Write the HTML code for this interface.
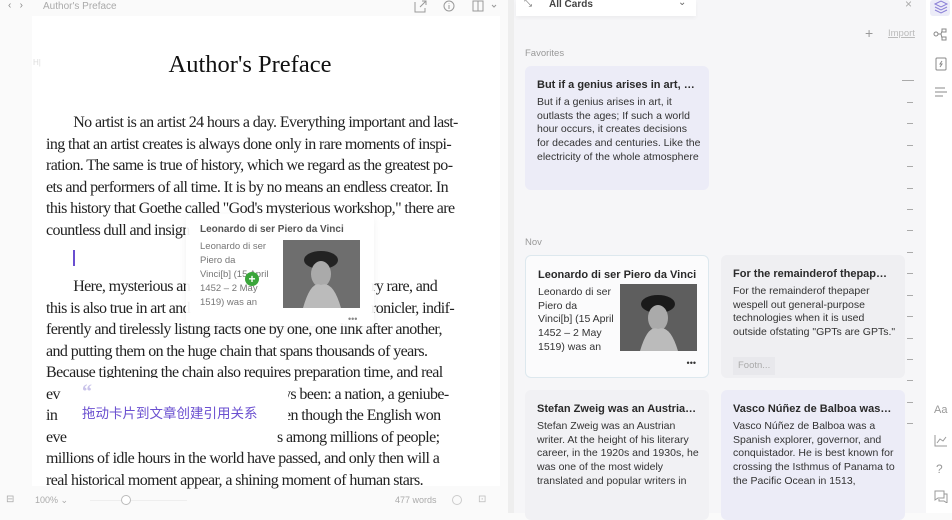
<!DOCTYPE html>
<html><head><meta charset="utf-8"><style>
*{margin:0;padding:0;box-sizing:border-box}
body{width:952px;height:513px;overflow:hidden;background:#fafafa;font-family:"Liberation Sans",sans-serif;position:relative}
.abs{position:absolute}
.doc{left:32px;top:16px;width:468px;height:470px;background:#fff}
.serif{font-family:"Liberation Serif",serif;font-size:16px;letter-spacing:-0.6px;color:#222;white-space:nowrap;line-height:21.5px}
.serif div{position:relative;height:21.5px}
.serif span{position:absolute;top:0}
.card{position:absolute;border-radius:6px;padding:13px 12px;font-size:10.5px;color:#333;line-height:13.8px;white-space:nowrap}
.card h4{font-size:11px;font-weight:600;color:#2a2a2a;margin:0 0 3px;white-space:nowrap;overflow:hidden;text-overflow:ellipsis}
.ico{position:absolute;color:#999;font-size:11px}
.tick{position:absolute;left:907px;width:6px;height:1px;background:#aaa}
</style></head><body>
<div class="abs" style="left:8px;top:0;font-size:10px;color:#888">‹&nbsp;&nbsp;&nbsp;›</div>
<div class="abs" style="left:43px;top:1px;font-size:10px;color:#aaa">Author's Preface</div>
<svg class="abs" style="left:414px;top:0" width="90" height="13" fill="none" stroke="#999" stroke-width="1"><path d="M1 2v10h10V8M6 7l6-6M8 1h4v4"/><circle cx="35" cy="6" r="5"/><path d="M35 5v4M35 3v0.5"/><rect x="59" y="1" width="10" height="10"/><path d="M64 1v10M78 5l2 2 2-2"/></svg>
<div class="abs" style="left:508px;top:0;width:6px;height:513px;background:#eee"></div>
<div class="abs doc"></div>
<div class="abs" style="left:33px;top:58px;font-size:8px;color:#ddd">H|</div>
<div class="abs" style="left:0;top:51px;width:500px;text-align:center;font-family:'Liberation Serif',serif;font-size:24.5px;color:#111">Author's Preface</div>
<div class="abs serif" style="left:46px;top:112px">
<div>&nbsp;&nbsp;&nbsp;&nbsp;&nbsp;&nbsp;&nbsp;&nbsp;No artist is an artist 24 hours a day. Everything important and last-</div>
<div>ing that an artist creates is always done only in rare moments of inspi-</div>
<div>ration. The same is true of history, which we regard as the greatest po-</div>
<div>ets and performers of all time. It is by no means an endless creator. In</div>
<div>this history that Goethe called "God's mysterious workshop," there are</div>
<div>countless dull and insign</div>
<div style="height:35px"></div>
<div>&nbsp;&nbsp;&nbsp;&nbsp;&nbsp;&nbsp;&nbsp;&nbsp;Here, mysterious an<span style="left:325px">ry rare, and</span></div>
<div>this is also true in art and<span style="left:325px">ronicler, indif-</span></div>
<div>ferently and tirelessly listing facts one by one, one link after another,</div>
<div>and putting them on the huge chain that spans thousands of years.</div>
<div>Because tightening the chain also requires preparation time, and real</div>
<div>ev<span style="left:237px">ys been: a nation, a geniube-</span></div>
<div>in<span style="left:238px">en though the English won</span></div>
<div>eve<span style="left:231px">s among millions of people;</span></div>
<div>millions of idle hours in the world have passed, and only then will a</div>
<div>real historical moment appear, a shining moment of human stars.</div>
</div>
<div class="abs" style="left:73px;top:250px;width:2px;height:16px;background:#6a4fd0"></div>
<div class="abs" style="left:186px;top:214px;width:188px;height:112px;background:rgba(255,255,255,0.93);border-radius:6px;box-shadow:0 2px 8px rgba(0,0,0,.06)"></div>
<div class="abs" style="left:200px;top:224px;font-size:10px;font-weight:600;color:#555">Leonardo di ser Piero da Vinci</div>
<div class="abs" style="left:200px;top:240px;font-size:9.5px;line-height:14px;color:#777;width:80px;white-space:nowrap">Leonardo di ser<br>Piero da<br>Vinci[b] (15 April<br>1452 – 2 May<br>1519) was an</div>
<svg class="abs" style="left:283px;top:240px" width="77" height="68"><rect width="77" height="68" fill="#6e6e6e"/><ellipse cx="38" cy="20" rx="17" ry="9" fill="#222"/><ellipse cx="38" cy="34" rx="10" ry="13" fill="#aaa"/><path d="M20 68 Q28 40 38 45 Q50 40 58 68Z" fill="#bbb"/></svg>
<div class="abs" style="left:245px;top:272px;width:14px;height:14px;border-radius:50%;background:#3aa53a;color:#fff;font-size:12px;line-height:14px;text-align:center;font-weight:bold">+</div>
<div class="abs" style="left:348px;top:314px;font-size:9px;color:#888">•••</div>
<div class="abs" style="left:62px;top:378px;width:226px;height:52px;background:#fff;border-radius:4px"></div>
<div class="abs" style="left:82px;top:381px;font-size:20px;color:#c9c3ea;font-family:'Liberation Serif',serif;font-weight:bold">“</div>
<div class="abs" style="left:82px;top:402px;font-size:13.5px;color:#6a4fd0;font-family:'Liberation Sans','Noto Sans CJK SC',sans-serif">拖动卡片到文章创建引用关系</div>
<div class="abs" style="left:6px;top:494px;font-size:10px;color:#aaa">⊟</div>
<div class="abs" style="left:35px;top:495px;font-size:9px;color:#aaa">100% ⌄</div>
<div class="abs" style="left:90px;top:500px;width:97px;height:1px;background:#eee"></div>
<div class="abs" style="left:121px;top:495px;width:10px;height:10px;border:1px solid #bbb;border-radius:50%;background:#fff"></div>
<div class="abs" style="left:395px;top:495px;font-size:9px;color:#aaa">477 words</div>
<div class="abs" style="left:452px;top:495px;width:10px;height:10px;border:1px solid #ccc;border-radius:50%"></div>
<div class="abs" style="left:478px;top:494px;font-size:10px;color:#bbb">⊡</div>
<div class="abs" style="left:514px;top:0;width:412px;height:513px;background:#f6f6f8"></div>
<div class="abs" style="left:516px;top:0;width:180px;height:16px;background:#fff;box-shadow:0 2px 4px rgba(0,0,0,.04)"></div>
<div class="abs" style="left:524px;top:-2px;font-size:10px;color:#666">⤡</div>
<div class="abs" style="left:549px;top:-1px;font-size:10px;font-weight:600;color:#444">All Cards</div>
<div class="abs" style="left:678px;top:-3px;font-size:10px;color:#666">⌄</div>
<div class="abs" style="left:905px;top:-3px;font-size:12px;color:#aaa">×</div>
<div class="abs" style="left:865px;top:25px;font-size:14px;color:#999">+</div>
<div class="abs" style="left:888px;top:28px;font-size:9.5px;color:#bbb;text-decoration:underline">Import</div>
<div class="abs" style="left:525px;top:48px;font-size:9.5px;color:#999">Favorites</div>
<div class="abs" style="left:525px;top:237px;font-size:9.5px;color:#999">Nov</div>
<div class="card" style="left:525px;top:66px;width:184px;height:124px;background:#ececf7"><h4>But if a genius arises in art, it o...</h4>But if a genius arises in art, it<br>outlasts the ages; If such a world<br>hour occurs, it creates decisions<br>for decades and centuries. Like the<br>electricity of the whole atmosphere</div>
<div class="card" style="left:525px;top:255px;width:184px;height:123px;background:#fbfbfc;border:1px solid #dde8ee"><h4 style="overflow:visible">Leonardo di ser Piero da Vinci</h4><div>Leonardo di ser<br>Piero da<br>Vinci[b] (15 April<br>1452 – 2 May<br>1519) was an</div><div style="position:absolute;right:12px;bottom:6px;font-size:9px;color:#333">•••</div></div>
<svg class="abs" style="left:620px;top:284px" width="77" height="67"><rect width="77" height="67" fill="#5e5e5e"/><ellipse cx="38" cy="20" rx="17" ry="9" fill="#1a1a1a"/><ellipse cx="38" cy="34" rx="10" ry="13" fill="#aaa"/><path d="M20 67 Q28 40 38 45 Q50 40 58 67Z" fill="#bbb"/></svg>
<div class="card" style="left:721px;top:255px;width:184px;height:123px;background:#efeff2"><h4>For the remainderof thepaper ...</h4>For the remainderof thepaper<br>wespell out general-purpose<br>technologies when it is used<br>outside ofstating "GPTs are GPTs."<div style="position:absolute;left:12px;top:102px;background:#e8e8ec;padding:2px 5px;color:#aaa;font-size:9.5px">Footn...</div></div>
<div class="card" style="left:525px;top:390px;width:184px;height:130px;background:#f1f1f4"><h4>Stefan Zweig was an Austrian ...</h4>Stefan Zweig was an Austrian<br>writer. At the height of his literary<br>career, in the 1920s and 1930s, he<br>was one of the most widely<br>translated and popular writers in</div>
<div class="card" style="left:721px;top:390px;width:184px;height:130px;background:#ececf7"><h4>Vasco Núñez de Balboa was a ...</h4>Vasco Núñez de Balboa was a<br>Spanish explorer, governor, and<br>conquistador. He is best known for<br>crossing the Isthmus of Panama to<br>the Pacific Ocean in 1513,</div>
<div class="abs" style="left:902px;top:80px;width:12px;height:1px;background:#aaa"></div>
<div class="tick" style="top:102px"></div><div class="tick" style="top:123px"></div><div class="tick" style="top:145px"></div><div class="tick" style="top:166px"></div><div class="tick" style="top:188px"></div><div class="tick" style="top:209px"></div><div class="tick" style="top:230px"></div><div class="tick" style="top:252px"></div><div class="tick" style="top:273px"></div><div class="tick" style="top:295px"></div><div class="tick" style="top:316px"></div><div class="tick" style="top:338px"></div><div class="tick" style="top:359px"></div><div class="tick" style="top:380px"></div><div class="tick" style="top:402px"></div><div class="tick" style="top:423px"></div>
<div class="abs" style="left:926px;top:0;width:26px;height:513px;background:#fff"></div>
<div class="abs" style="left:930px;top:0;width:20px;height:16px;background:#ececf8;border-radius:3px"></div>
<svg class="abs" style="left:933px;top:0" width="16" height="110" fill="none" stroke="#888" stroke-width="1"><path d="M2 4l6-3 6 3-6 3z M2 7l6 3 6-3 M2 10l6 3 6-3" stroke="#8a7fd6"/><circle cx="3" cy="34" r="2"/><rect x="9" y="29" width="4" height="3"/><rect x="9" y="37" width="4" height="3"/><path d="M5 34h3l1-3M8 34l1 4"/><rect x="3" y="58" width="10" height="12" rx="1"/><path d="M9 61l-2 3h2l-2 3"/><path d="M2 88h10M2 92h12M2 96h8"/></svg>
<div class="ico" style="left:934px;top:404px">Aa</div>
<svg class="abs" style="left:934px;top:434px" width="14" height="13" fill="none" stroke="#999"><path d="M1 1v11h12M3 9l3-4 3 2 3-4"/></svg>
<div class="ico" style="left:936px;top:462px;font-size:12px">?</div>
<svg class="abs" style="left:934px;top:490px" width="14" height="13" fill="none" stroke="#999"><path d="M1 1h9v7H4l-3 2z M5 9v2h5l3 2V4h-3"/></svg>
</body></html>
